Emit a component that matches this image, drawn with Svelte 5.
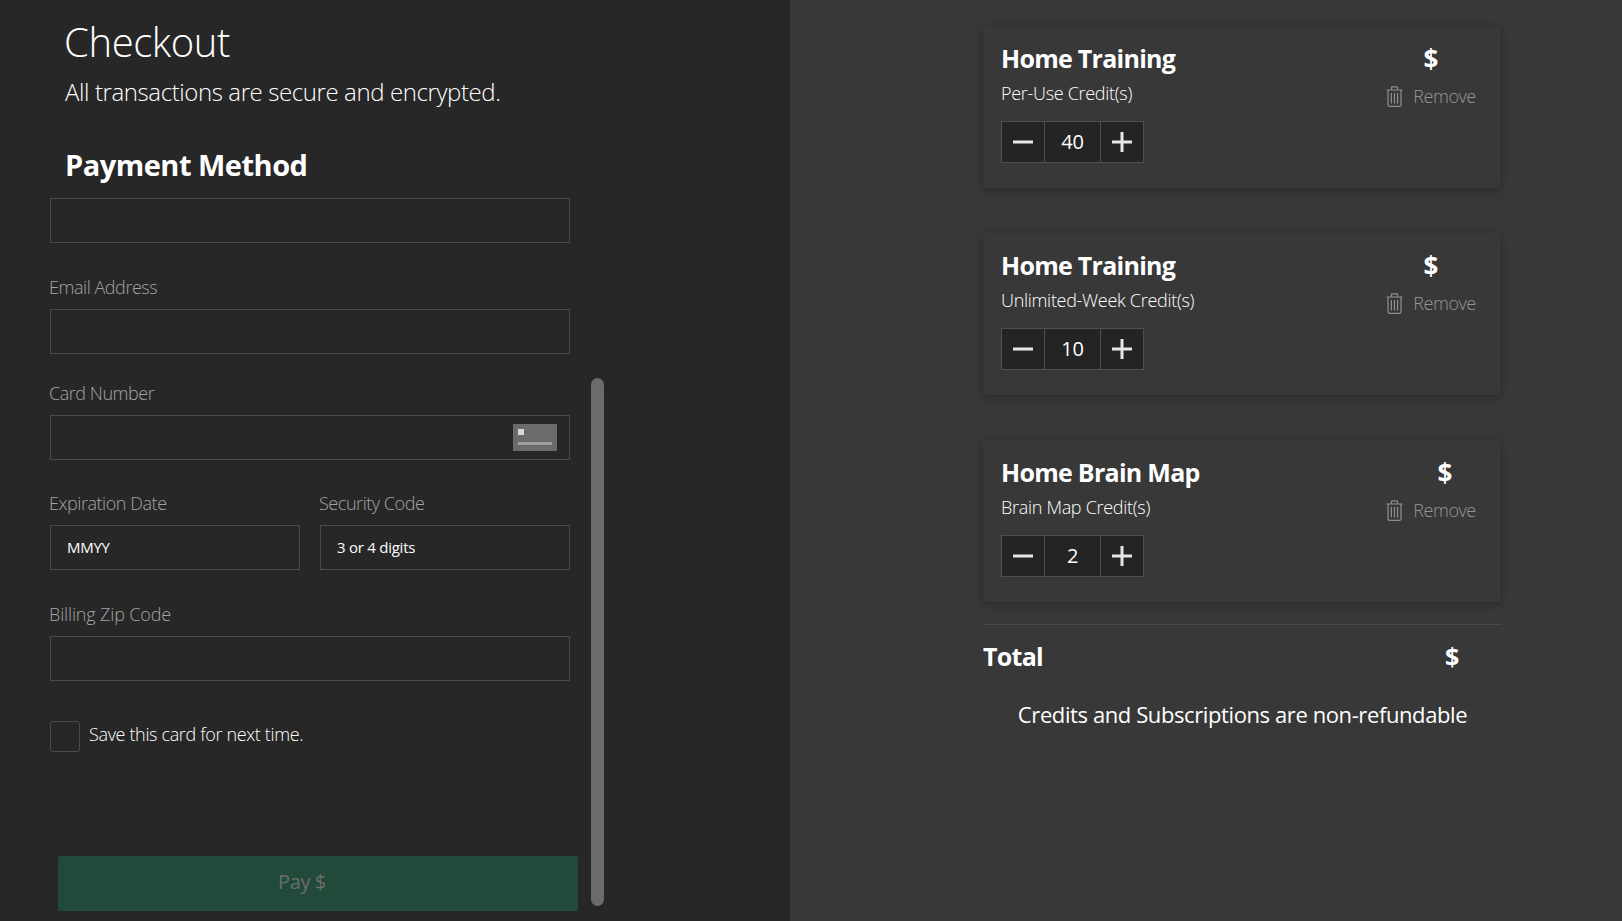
<script>
  const items = [
    { title: 'Home Training', sub: 'Per-Use Credit(s)', qty: 40, priceClass: '' },
    { title: 'Home Training', sub: 'Unlimited-Week Credit(s)', qty: 10, priceClass: '' },
    { title: 'Home Brain Map', sub: 'Brain Map Credit(s)', qty: 2, priceClass: 'shift' }
  ];
</script>

<div class="page">
  <section class="left">
    <h1>Checkout</h1>
    <p class="secure">All transactions are secure and encrypted.</p>
    <h2>Payment Method</h2>
    <div class="form">
      <div class="input first"></div>
      <div class="label email">Email Address</div>
      <div class="input"></div>
      <div class="label cardno">Card Number</div>
      <div class="input card">
        <svg width="44" height="27" viewBox="0 0 44 27" aria-hidden="true">
          <rect width="44" height="27" fill="#6b6b6b" />
          <rect x="5" y="5" width="6" height="6" fill="#d8d8d8" />
          <rect x="5" y="18" width="34" height="3" fill="#a0a0a0" />
        </svg>
      </div>
      <div class="pair">
        <div class="col">
          <div class="label exp">Expiration Date</div>
          <div class="input ph">MMYY</div>
        </div>
        <div class="col">
          <div class="label exp">Security Code</div>
          <div class="input ph">3 or 4 digits</div>
        </div>
      </div>
      <div class="label email zip">Billing Zip Code</div>
      <div class="input"></div>
      <div class="save">
        <span class="check"></span>
        <span class="save-text">Save this card for next time.</span>
      </div>
    </div>
    <button class="pay">Pay $</button>
    <div class="scrollbar"></div>
  </section>

  <section class="right">
    <div class="column">
      {#each items as item}
        <article class="item">
          <div class="info">
            <div class="title">{item.title}</div>
            <div class="sub">{item.sub}</div>
            <div class="stepper">
              <span class="step">
                <svg width="20" height="20" viewBox="0 0 20 20" aria-hidden="true"><path d="M0 10H20" stroke="#e4e8ec" stroke-width="3" /></svg>
              </span>
              <span class="qty">{item.qty}</span>
              <span class="step">
                <svg width="20" height="20" viewBox="0 0 20 20" aria-hidden="true"><path d="M0 10H20M10 0V20" stroke="#e4e8ec" stroke-width="3" /></svg>
              </span>
            </div>
          </div>
          <div class="side">
            <div class="price {item.priceClass}">$</div>
            <div class="remove">
              <svg width="17" height="21" viewBox="0 0 17 21" fill="none" stroke="#8f8f8f" stroke-width="1.2" aria-hidden="true">
                <path d="M0.5 4H16.5M5.5 4V1.5Q5.5 0.8 6.2 0.8H10.8Q11.5 0.8 11.5 1.5V4M2 4V18.5Q2 20.4 3.9 20.4H13.1Q15 20.4 15 18.5V4M5.4 7V17.5M8.5 7V17.5M11.6 7V17.5" />
              </svg>
              <span>Remove</span>
            </div>
          </div>
        </article>
      {/each}
      <div class="total">
        <span>Total</span>
        <span class="total-price">$</span>
      </div>
      <p class="note">Credits and Subscriptions are non-refundable</p>
    </div>
  </section>
</div>

<style>
  :global(body) {
    margin: 0;
    background: #383838;
  }
  .page {
    display: flex;
    width: 1622px;
    height: 921px;
    overflow: hidden;
    font-family: "Open Sans", "Noto Sans", sans-serif;
    color: #fff;
  }
  .left {
    position: relative;
    box-sizing: border-box;
    width: 790px;
    height: 921px;
    background: #272727;
    padding: 17px 0 0 50px;
  }
  h1 {
    margin: 0 0 0 14px;
    font-size: 40px;
    line-height: 50px;
    font-weight: 300;
    letter-spacing: -0.4px;
  }
  .secure {
    margin: 9px 0 0 15px;
    font-size: 24px;
    line-height: 32px;
    font-weight: 300;
    letter-spacing: -0.4px;
  }
  h2 {
    margin: 37px 0 0 15px;
    font-size: 29px;
    line-height: 40px;
    font-weight: 700;
    letter-spacing: -0.5px;
  }
  .form {
    width: 520px;
    margin-top: 13px;
  }
  .input {
    box-sizing: border-box;
    height: 45px;
    border: 1px solid #4a4a4a;
    display: flex;
    align-items: center;
  }
  .label {
    margin: 32px 0 9px -1px;
    font-size: 18px;
    line-height: 25px;
    color: #a4a4a4;
    letter-spacing: -0.45px;
    font-weight: 300;
  }
  .label.cardno {
    margin-top: 27px;
  }
  .label.exp {
    margin-top: 31px;
  }
  .label.zip {
    letter-spacing: -0.15px;
  }
  .card {
    justify-content: flex-end;
    padding-right: 12px;
  }
  .pair {
    display: flex;
    gap: 20px;
  }
  .col {
    flex: 1;
  }
  .ph {
    padding: 0 0 2px 16px;
    font-size: 15px;
    letter-spacing: -0.25px;
  }
  .save {
    display: flex;
    align-items: center;
    gap: 9px;
    margin-top: 40px;
    font-size: 18px;
    letter-spacing: -0.35px;
    font-weight: 300;
  }
  .save-text {
    padding-bottom: 5px;
  }
  .check {
    box-sizing: border-box;
    width: 30px;
    height: 31px;
    border: 1px solid #4a4a4a;
    border-radius: 3px;
  }
  .pay {
    position: absolute;
    left: 58px;
    top: 856px;
    width: 520px;
    height: 55px;
    padding: 0 32px 4px 0;
    border: 0;
    border-radius: 2px;
    background: #214a3b;
    color: #6c6c6c;
    font: 400 20px "Open Sans", sans-serif;
    letter-spacing: -0.4px;
  }
  .scrollbar {
    position: absolute;
    left: 591px;
    top: 378px;
    width: 13px;
    height: 528px;
    border-radius: 7px;
    background: #6b6b6b;
  }
  .right {
    flex: 1;
    min-width: 0;
  }
  .column {
    width: 519px;
    margin: 26px 0 0 193px;
  }
  .item {
    box-sizing: border-box;
    display: flex;
    justify-content: space-between;
    width: 517px;
    height: 162px;
    margin-bottom: 45px;
    padding: 17px 24px 0 18px;
    background: #383838;
    box-shadow: 0 2px 8px rgba(0, 0, 0, 0.28);
  }
  .item:nth-of-type(3) {
    margin-bottom: 22px;
  }
  .title {
    font-size: 25px;
    line-height: 30px;
    font-weight: 700;
    letter-spacing: -0.72px;
  }
  .sub {
    margin-top: 8px;
    font-size: 18px;
    line-height: 24px;
    font-weight: 300;
    letter-spacing: -0.3px;
  }
  .stepper {
    display: inline-flex;
    margin-top: 16px;
    height: 42px;
    box-sizing: border-box;
    border: 1px solid #4f4f4f;
    background: #242424;
  }
  .step {
    width: 42px;
    display: flex;
    align-items: center;
    justify-content: center;
  }
  .qty {
    width: 55px;
    border-left: 1px solid #4f4f4f;
    border-right: 1px solid #4f4f4f;
    text-align: center;
    font-size: 20px;
    line-height: 40px;
    letter-spacing: -0.3px;
  }
  .side {
    width: 90px;
    display: flex;
    flex-direction: column;
    align-items: center;
  }
  .price {
    font-size: 26px;
    line-height: 30px;
    font-weight: 700;
    margin-top: 1px;
  }
  .price.shift {
    transform: translateX(14px);
  }
  .remove {
    display: flex;
    align-items: center;
    gap: 10px;
    margin-top: 10px;
    font-size: 18px;
    line-height: 24px;
    font-weight: 300;
    color: #969696;
    letter-spacing: -0.45px;
  }
  .total {
    position: relative;
    width: 519px;
    border-top: 1px solid #4a4a4a;
    padding-top: 15px;
    font-size: 25px;
    line-height: 32px;
    font-weight: 700;
    letter-spacing: -0.72px;
  }
  .total-price {
    position: absolute;
    left: 462px;
  }
  .note {
    margin: 27px 0 0;
    text-align: center;
    font-size: 22px;
    line-height: 30px;
    font-weight: 400;
    letter-spacing: -0.4px;
  }
</style>
